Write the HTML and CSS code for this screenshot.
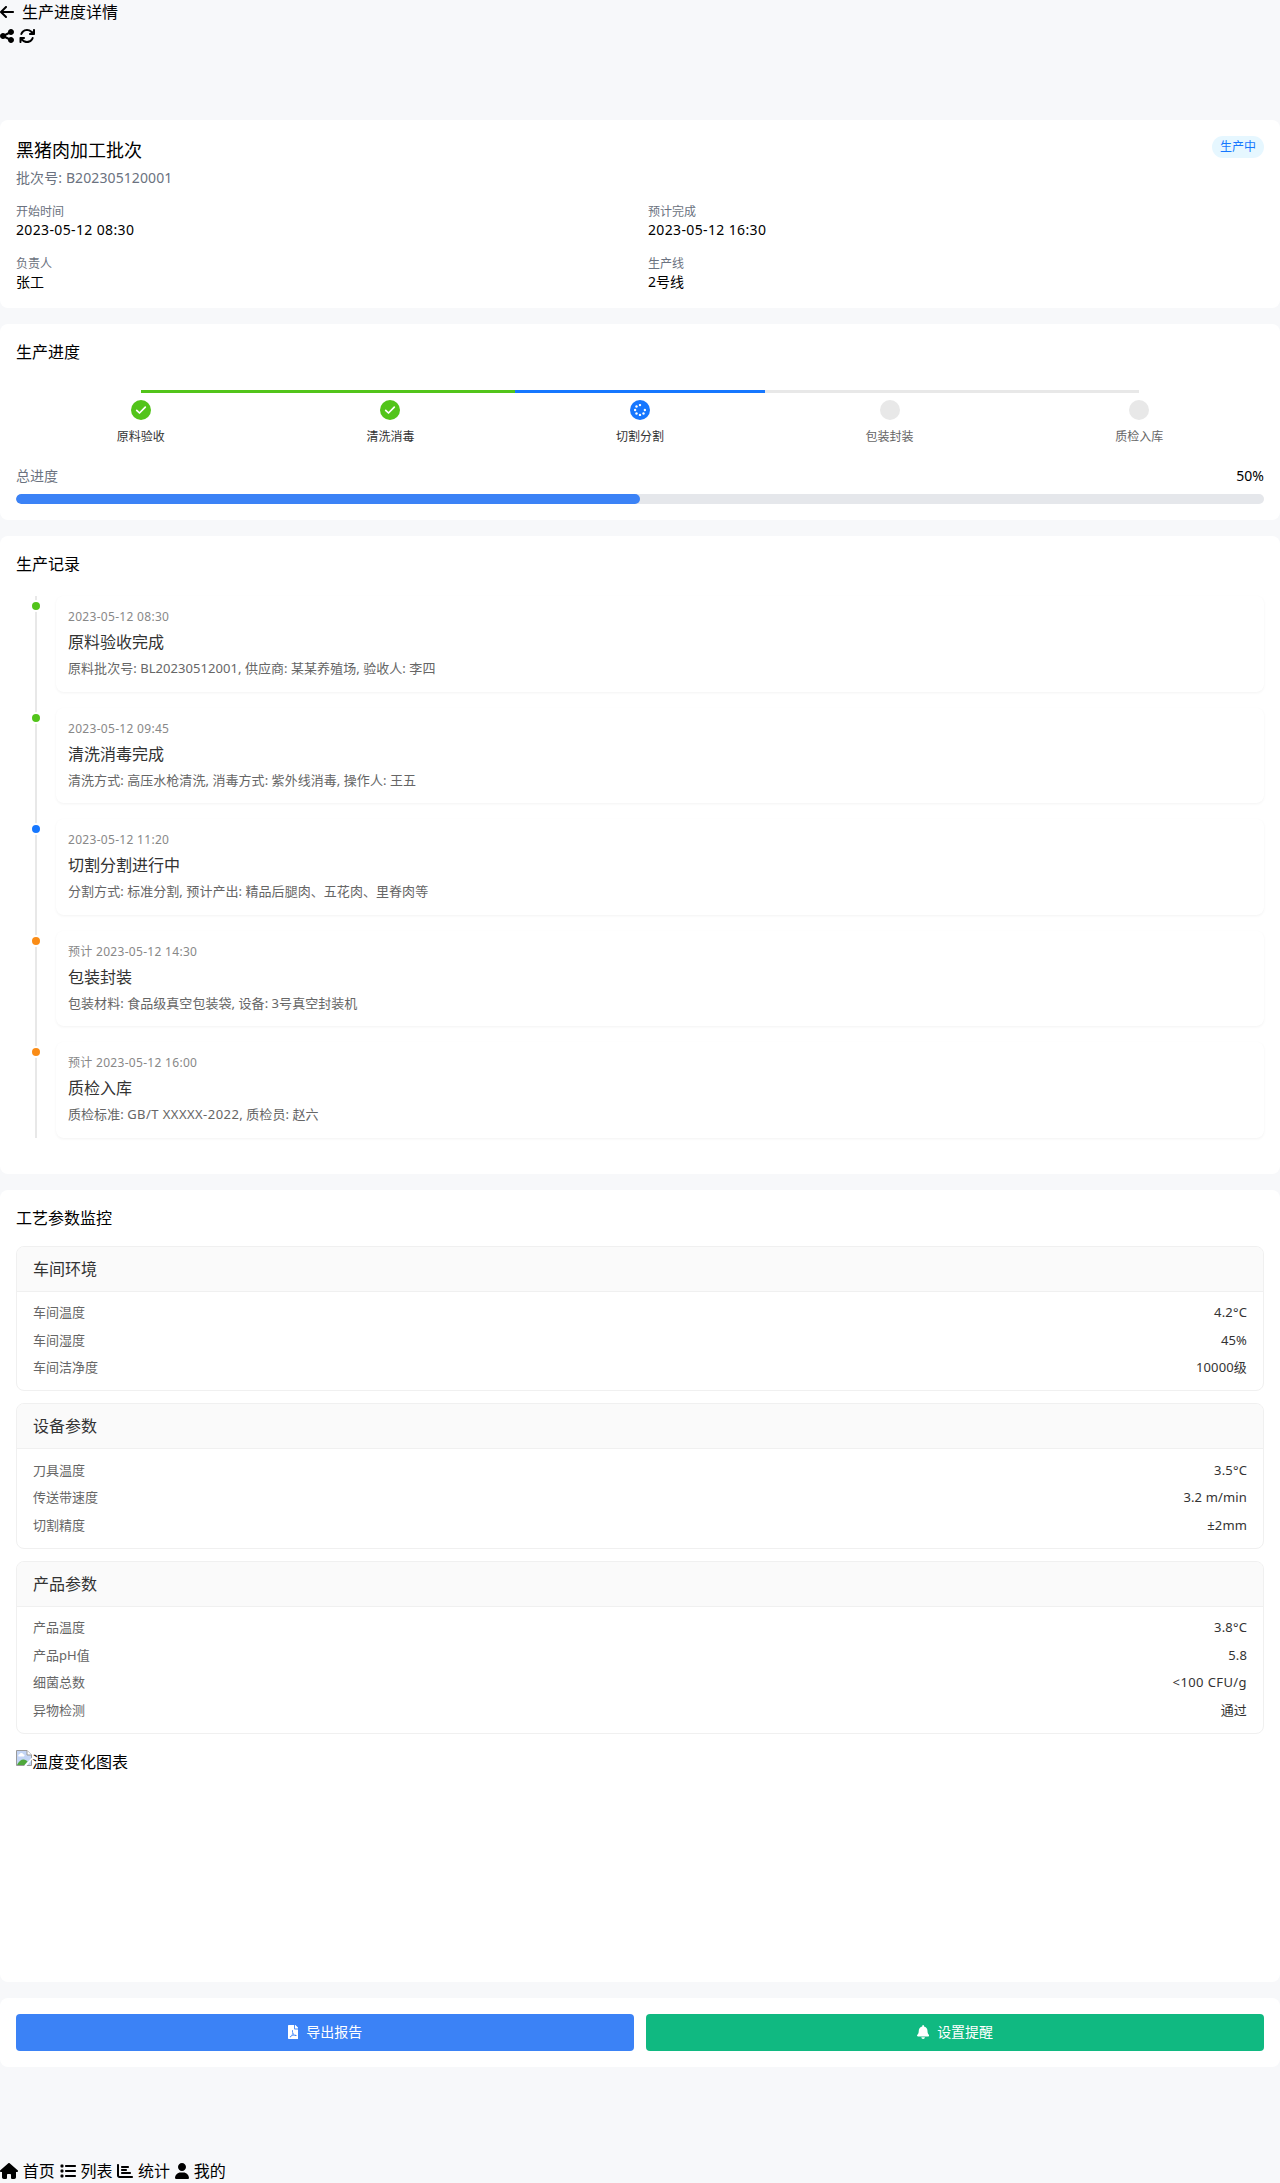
FILE: index.html
```html
<!DOCTYPE html>
<html lang="zh-CN">
<head>
<meta charset="utf-8">
<title>生产进度详情</title>
<link rel="stylesheet" href="styles.css">
</head>
<body>
<header class="header">
  <div class="header-line back">
    <svg class="icon w14" viewBox="0 0 448 512"><path d="M9.4 233.400c-12.500 12.500-12.500 32.800 0 45.300l160 160c12.500 12.500 32.800 12.500 45.300 0s12.500-32.800 0-45.300L109.200 288H416c17.700 0 32-14.300 32-32s-14.300-32-32-32H109.300L214.600 118.600c12.500-12.500 12.500-32.800 0-45.300s-32.800-12.500-45.300 0l-160 160z"/></svg>
    <h1>生产进度详情</h1>
  </div>
  <div class="header-line tools">
    <svg class="icon w14" viewBox="0 0 448 512"><path d="M352 224c53 0 96-43 96-96s-43-96-96-96-96 43-96 96c0 4 .2 8 .7 11.900l-94.100 47C145.400 170.200 121.900 160 96 160c-53 0-96 43-96 96s43 96 96 96c25.900 0 49.400-10.200 66.600-26.900l94.100 47c-.5 3.900-.7 7.800-.7 11.900 0 53 43 96 96 96s96-43 96-96-43-96-96-96c-25.900 0-49.400 10.200-66.600 26.900l-94.100-47c.5-3.900.7-7.800.7-11.900s-.2-8-.7-11.900l94.100-47C302.600 213.800 326.100 224 352 224z"/></svg>
    <svg class="icon w16" viewBox="0 0 512 512"><path d="M105.100 202.600c7.700-21.800 20.200-42.300 37.800-59.800 62.500-62.500 163.800-62.500 226.300 0L386.300 160H352c-17.700 0-32 14.300-32 32s14.300 32 32 32h128c17.700 0 32-14.300 32-32V64c0-17.700-14.300-32-32-32s-32 14.300-32 32v51.200L414.400 97.600c-87.500-87.500-229.300-87.500-316.800 0-24.400 24.400-42 53.100-52.800 83.800-5.900 16.700 2.900 34.900 19.500 40.800s34.900-2.900 40.800-19.600zM39 289.300c-5 1.500-9.800 4.200-13.700 8.200-4 4-6.700 8.800-8.100 14-.3 1.200-.6 2.500-.8 3.800-.3 1.700-.4 3.400-.4 5.100V448c0 17.700 14.300 32 32 32s32-14.300 32-32v-51.100l17.600 17.500c87.500 87.400 229.300 87.400 316.700 0 24.400-24.400 42.100-53.100 52.900-83.700 5.900-16.700-2.900-34.900-19.500-40.800s-34.900 2.900-40.800 19.500c-7.700 21.800-20.200 42.300-37.800 59.800-62.500 62.500-163.800 62.500-226.300 0L125.600 352H160c17.700 0 32-14.300 32-32s-14.300-32-32-32H48.400c-3.200 0-6.400.4-9.400 1.300z"/></svg>
  </div>
</header>

<main class="main">
  <section class="card">
    <div class="batch-head">
      <div>
        <h2 class="batch-name">黑猪肉加工批次</h2>
        <p class="batch-no">批次号: B202305120001</p>
      </div>
      <span class="badge">生产中</span>
    </div>
    <dl class="info">
      <div><dt>开始时间</dt><dd class="date">2023-05-12 08:30</dd></div>
      <div><dt>预计完成</dt><dd class="date">2023-05-12 16:30</dd></div>
      <div><dt>负责人</dt><dd>张工</dd></div>
      <div><dt>生产线</dt><dd>2号线</dd></div>
    </dl>
  </section>

  <section class="card">
    <h3 class="card-title">生产进度</h3>
    <div class="track"><span class="track-done"></span><span class="track-active"></span><span class="track-rest"></span></div>
    <ol class="steps">
      <li class="step"><span class="step-dot done"><svg viewBox="0 0 12 12"><path d="M1.700 6.300 4.500 9 10.300 3.200" fill="none" stroke="#fff" stroke-width="1.700" stroke-linecap="round" stroke-linejoin="round"/></svg></span>原料验收</li>
      <li class="step"><span class="step-dot done"><svg viewBox="0 0 12 12"><path d="M1.700 6.300 4.500 9 10.300 3.200" fill="none" stroke="#fff" stroke-width="1.700" stroke-linecap="round" stroke-linejoin="round"/></svg></span>清洗消毒</li>
      <li class="step"><span class="step-dot active"><svg viewBox="0 0 12 12" fill="#fff"><circle cx="6" cy="1.100" r="1.200"/><circle cx="6" cy="10.900" r="1.200"/><circle cx="1.100" cy="6" r="1.200"/><circle cx="10.900" cy="6" r="1.200"/><circle cx="2.500" cy="2.500" r="1.200"/><circle cx="2.500" cy="9.500" r="1.200"/><circle cx="9.500" cy="9.500" r="1.200"/></svg></span>切割分割</li>
      <li class="step pending"><span class="step-dot"></span>包装封装</li>
      <li class="step pending"><span class="step-dot"></span>质检入库</li>
    </ol>
    <div class="total"><span class="total-label">总进度</span><span>50%</span></div>
    <div class="bar"><div class="bar-fill" style="width:50%"></div></div>
  </section>

  <section class="card">
    <h3 class="card-title">生产记录</h3>
    <ol class="timeline">
      <li class="event green"><time>2023-05-12 08:30</time><h4>原料验收完成</h4><p>原料批次号: BL20230512001, 供应商: 某某养殖场, 验收人: 李四</p></li>
      <li class="event green"><time>2023-05-12 09:45</time><h4>清洗消毒完成</h4><p>清洗方式: 高压水枪清洗, 消毒方式: 紫外线消毒, 操作人: 王五</p></li>
      <li class="event blue"><time>2023-05-12 11:20</time><h4>切割分割进行中</h4><p>分割方式: 标准分割, 预计产出: 精品后腿肉、五花肉、里脊肉等</p></li>
      <li class="event orange"><time>预计 2023-05-12 14:30</time><h4>包装封装</h4><p>包装材料: 食品级真空包装袋, 设备: 3号真空封装机</p></li>
      <li class="event orange"><time>预计 2023-05-12 16:00</time><h4>质检入库</h4><p>质检标准: <span class="code">GB/T XXXXX-2022</span>, 质检员: 赵六</p></li>
    </ol>
  </section>

  <section class="card">
    <h3 class="card-title">工艺参数监控</h3>
    <div class="params">
      <div class="param">
        <h4>车间环境</h4>
        <dl>
          <div><dt>车间温度</dt><dd>4.2°C</dd></div>
          <div><dt>车间湿度</dt><dd>45%</dd></div>
          <div><dt>车间洁净度</dt><dd>10000级</dd></div>
        </dl>
      </div>
      <div class="param">
        <h4>设备参数</h4>
        <dl>
          <div><dt>刀具温度</dt><dd>3.5°C</dd></div>
          <div><dt>传送带速度</dt><dd>3.2 m/min</dd></div>
          <div><dt>切割精度</dt><dd>±2mm</dd></div>
        </dl>
      </div>
      <div class="param">
        <h4>产品参数</h4>
        <dl>
          <div><dt>产品温度</dt><dd>3.8°C</dd></div>
          <div><dt>产品pH值</dt><dd>5.8</dd></div>
          <div><dt>细菌总数</dt><dd class="code">&lt;100 CFU/g</dd></div>
          <div><dt>异物检测</dt><dd>通过</dd></div>
        </dl>
      </div>
    </div>
    <div class="chart">
      <svg class="broken" viewBox="0 0 16 16"><path d="M.5.500h10.500l4.500 4.500v10.500H.500z" fill="#c3d5f5"/><path d="M2.500 6.500a1.500 1.500 0 0 1 1-2.300 2 2 0 0 1 3.700.1 1.200 1.200 0 0 1 .8 2.200z" fill="#fff"/><path d="M1 15c1.500-3.500 4-5.500 6.500-5.500 2 0 3 1 4 2L8.500 15z" fill="#4fa83b"/><path d="M.5 15.500V.500H11l4.500 4.500v10.500z" fill="none" stroke="#9a9a9a"/><path d="M11 .500V5h4.500" fill="#fff" stroke="#9a9a9a"/><path d="M16 7.500v2L10.500 16H8z" fill="#fff"/></svg><span>温度变化图表</span>
    </div>
  </section>

  <section class="card actions">
    <button class="btn export"><svg class="icon" viewBox="0 0 384 512"><path fill-rule="evenodd" d="M224 136V0H24C10.700 0 0 10.700 0 24v464c0 13.300 10.700 24 24 24h336c13.300 0 24-10.700 24-24V160H248c-13.200 0-24-10.800-24-24zm-42 120c7-30-2-72-18-70-25 3-13 73 2 105-13 36-31 72-49 98-36 18-65 42-51 61 17 18 47-11 71-47 30-10 63-18 92-22 27 18 73 29 84 10 10-23-28-35-66-30-34-18-53-54-65-105zm-5 63c10 20 22 34 34 43-20 3-38 8-54 13 8-17 15-35 20-56zM384 122v6H256V0h6c6 0 12 3 17 7l98 98c4 5 7 11 7 17z"/></svg>导出报告</button>
    <button class="btn remind"><svg class="icon" viewBox="0 0 448 512"><path d="M224 512c35.300 0 63.900-28.700 63.900-64H160.100c0 35.300 28.600 64 63.900 64zm215.400-149.700c-19.300-20.800-55.500-52-55.500-154.300 0-77.700-54.500-139.900-127.900-155.200V32c0-17.700-14.300-32-32-32s-32 14.300-32 32v20.800C118.600 68.100 64.100 130.300 64.100 208c0 102.300-36.200 133.500-55.500 154.300-6 6.400-8.700 14.100-8.600 21.700.1 16.400 13 32 32.100 32h383.800c19.100 0 32-15.600 32.100-32 0-7.600-2.600-15.300-8.600-21.700z"/></svg>设置提醒</button>
  </section>
</main>

<nav class="nav">
  <a><svg class="icon w18" viewBox="0 0 576 512"><path d="M575.800 255.500c0 18-15 32.100-32 32.100h-32l.7 160.200c0 35-22.200 64.200-56.500 64.200H392c-22.100 0-40-17.900-40-40v-88c0-17.700-14.300-32-32-32h-64c-17.700 0-32 14.300-32 32v88c0 22.100-17.900 40-40 40h-64c-31 0-56-25-56-56V287.600H32c-18 0-32-14-32-32.100 0-9 3-17 10-24L266.400 8c7-7 15-8 22-8s15 2 21 7l255.400 224.500c8 7 12 15 11 24z"/></svg>首页</a>
  <a><svg class="icon w16" viewBox="0 0 512 512"><path d="M40 48h48c13 0 24 11 24 24v48c0 13-11 24-24 24H40c-13 0-24-11-24-24V72c0-13 11-24 24-24zm152 16h288c18 0 32 14 32 32s-14 32-32 32H192c-18 0-32-14-32-32s14-32 32-32zm0 160h288c18 0 32 14 32 32s-14 32-32 32H192c-18 0-32-14-32-32s14-32 32-32zm0 160h288c18 0 32 14 32 32s-14 32-32 32H192c-18 0-32-14-32-32s14-32 32-32zM40 208h48c13 0 24 11 24 24v48c0 13-11 24-24 24H40c-13 0-24-11-24-24v-48c0-13 11-24 24-24zm0 160h48c13 0 24 11 24 24v48c0 13-11 24-24 24H40c-13 0-24-11-24-24v-48c0-13 11-24 24-24z"/></svg>列表</a>
  <a><svg class="icon w16" viewBox="0 0 512 512"><path d="M32 32c17.700 0 32 14.300 32 32v336c0 8.800 7.200 16 16 16h400c17.700 0 32 14.300 32 32s-14.300 32-32 32H80c-44.200 0-80-35.800-80-80V64c0-17.700 14.300-32 32-32zm96 96c0-17.700 14.300-32 32-32h192c17.700 0 32 14.300 32 32s-14.300 32-32 32H160c-17.700 0-32-14.300-32-32zm32 64h128c17.700 0 32 14.300 32 32s-14.300 32-32 32H160c-17.700 0-32-14.300-32-32s14.300-32 32-32zm0 96h256c17.700 0 32 14.300 32 32s-14.300 32-32 32H160c-17.700 0-32-14.300-32-32s14.300-32 32-32z"/></svg>统计</a>
  <a><svg class="icon w14" viewBox="0 0 448 512"><path d="M224 256c70.700 0 128-57.300 128-128S294.700 0 224 0 96 57.300 96 128s57.300 128 128 128zm-45.700 48C79.800 304 0 383.800 0 482.300 0 498.700 13.300 512 29.700 512h388.600c16.400 0 29.700-13.300 29.700-29.700C448 383.800 368.200 304 269.700 304z"/></svg>我的</a>
</nav>
</body>
</html>
```
FILE: styles.css
```css
*, *::before, *::after { box-sizing: border-box; margin: 0; padding: 0; }
body {
  background: #f7f8fa;
  color: #000;
  font: 16px/24px "Noto Sans", "Noto Sans CJK SC", sans-serif;
  font-weight: 400;
}
h1, h2, h3, h4 { font-size: 16px; font-weight: 400; line-height: 24px; }
ol { list-style: none; }
.icon { display: block; height: 16px; fill: currentColor; flex: none; }
.w14 { width: 14px; }
.w16 { width: 16px; }
.w18 { width: 18px; }

.header-line { display: flex; align-items: center; height: 24px; }
.back { gap: 8px; }
.tools { gap: 4.5px; }

.main { display: flex; flex-direction: column; gap: 16px; padding: 72px 0 92px; }
.card { background: #fff; border-radius: 8px; padding: 16px; }

.batch-head { display: flex; justify-content: space-between; align-items: flex-start; }
.batch-name { font-size: 18px; line-height: 28px; }
.batch-no { margin-top: 4px; font-size: 14px; line-height: 20px; color: #6b7280; letter-spacing: .1px; }
.badge { padding: 2px 8px; border-radius: 11px; background: #e6f7ff; color: #1677ff; font-size: 12px; line-height: 18px; }
.info { display: grid; grid-template-columns: 1fr 1fr; gap: 16px; margin-top: 16px; }
.info dt { font-size: 12px; line-height: 16px; color: #6b7280; }
.info dd { font-size: 14px; line-height: 20px; }
.info .date { letter-spacing: .36px; }

.track { display: flex; height: 3px; margin: 26px 10% 0; }
.track-done { width: 37.5%; background: #52c41a; }
.track-active { width: 25%; background: #1677ff; }
.track-rest { flex: 1; background: #e8e8e8; }
.steps { display: flex; margin-top: 7px; }
.step { flex: 1; display: flex; flex-direction: column; align-items: center; gap: 8px; font-size: 12px; line-height: 18px; color: #333; }
.step.pending { color: #666; }
.step-dot { display: flex; align-items: center; justify-content: center; width: 20px; height: 20px; border-radius: 50%; background: #e8e8e8; }
.step-dot svg { width: 12px; height: 12px; }
.step-dot.done { background: #52c41a; }
.step-dot.active { background: #1677ff; }
.total { display: flex; justify-content: space-between; margin-top: 20px; font-size: 14px; line-height: 20px; }
.total-label { color: #6b7280; }
.bar { height: 10px; margin-top: 8px; border-radius: 5px; background: #e5e7eb; overflow: hidden; }
.bar-fill { height: 100%; border-radius: 5px; background: #3b82f6; }

.timeline { position: relative; display: flex; flex-direction: column; gap: 16px; margin: 20px 0; padding-left: 40px; }
.timeline::before { content: ""; position: absolute; left: 19px; top: 0; bottom: 0; width: 2px; background: #e8e8e8; }
.event { position: relative; height: 95.5px; padding: 12px; border-radius: 8px; background: #fff; box-shadow: 0 1px 3px rgba(0, 0, 0, .05); }
.event::before { content: ""; position: absolute; left: -26px; top: 4px; width: 12px; height: 12px; border: 2px solid #fff; border-radius: 50%; background: var(--dot); }
.green { --dot: #52c41a; }
.blue { --dot: #1677ff; }
.orange { --dot: #fa8c16; }
.event time { display: block; font-size: 12px; line-height: 18px; color: #888; letter-spacing: .3px; }
.event h4 { margin: 4px 0 5px; color: #333; }
.event p { font-size: 13px; line-height: 19.5px; color: #666; letter-spacing: .05px; }
.event .code { letter-spacing: .45px; }

.params { display: flex; flex-direction: column; gap: 12px; margin-top: 16px; }
.param { border: 1px solid #f0f0f0; border-radius: 8px; overflow: hidden; }
.param h4 { padding: 10px 16px; border-bottom: 1px solid #f0f0f0; background: #fafafa; color: #333; }
.param dl { display: flex; flex-direction: column; gap: 8px; padding: 11.5px 16px 12.5px; font-size: 13px; line-height: 19.5px; }
.param dl div { display: flex; justify-content: space-between; }
.param dt { color: #666; }
.param dd { color: #333; letter-spacing: .15px; }
.param .code { letter-spacing: .4px; }
.chart { display: flex; height: 216px; margin-top: 16px; }
.broken { width: 16px; height: 16px; }

.actions { display: flex; gap: 12px; }
.btn { flex: 1; display: flex; align-items: center; justify-content: center; gap: 8px; height: 37px; padding-bottom: 1px; border: 0; border-radius: 4px; color: #fff; font: inherit; font-size: 14px; line-height: 21px; }
.btn .icon { height: 14px; }
.export { background: #3b82f6; }
.remind { background: #10b981; }

.nav { display: flex; gap: 4.8px; height: 24px; }
.nav a { display: flex; align-items: center; gap: 4.8px; }
```
